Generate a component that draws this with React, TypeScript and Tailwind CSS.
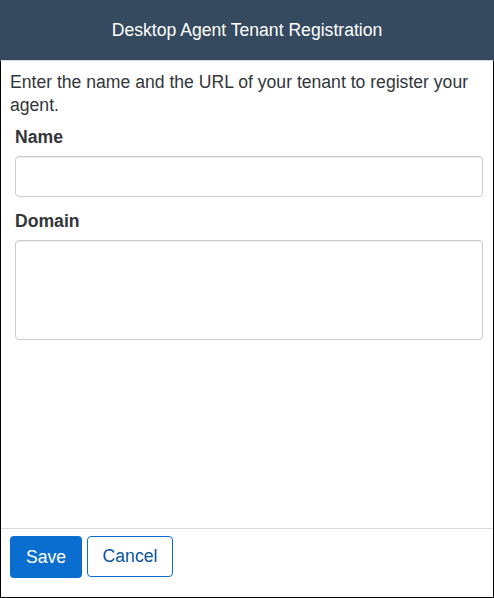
import React, { useState } from 'react';

const App: React.FC = () => {
  const [name, setName] = useState('');
  const [domain, setDomain] = useState('');

  return (
    <div className="flex h-[598px] w-[494px] flex-col bg-white font-['Liberation_Sans',Arial,sans-serif] text-[#32363a]">
      <div className="flex h-[60px] flex-none items-center justify-center bg-[#354a5f] text-[17.6px] text-white">
        Desktop Agent Tenant Registration
      </div>

      <div className="flex flex-1 flex-col border-x border-t border-x-black border-t-[#d9d9d9]">
        <div className="flex-1 pt-[10px]">
          <p className="px-[9px] text-[17.6px] leading-[23px]">
            Enter the name and the URL of your tenant to register your agent.
          </p>

          <div className="pl-[14px] pr-[10px]">
            <label className="mt-[9px] block text-[17.6px] font-bold leading-[22px]">Name</label>
            <input
              type="text"
              value={name}
              onChange={(e) => setName(e.target.value)}
              className="mt-[8px] block h-[41px] w-full rounded-[4px] border border-[#cccccc] px-2 shadow-[inset_0_1px_1px_rgba(0,0,0,0.075)] outline-none"
            />

            <label className="mt-[13px] block text-[17.6px] font-bold leading-[22px]">Domain</label>
            <textarea
              value={domain}
              onChange={(e) => setDomain(e.target.value)}
              className="mt-[8px] block h-[100px] w-full resize-none rounded-[4px] border border-[#cccccc] px-2 shadow-[inset_0_1px_1px_rgba(0,0,0,0.075)] outline-none"
            />
          </div>
        </div>

        <div className="flex h-[69px] flex-none items-start gap-[5px] border-t border-[#d9d9d9] px-[9px] pt-[7px]">
          <button className="h-[42px] w-[72px] rounded-[4px] bg-[#0a6ed1] text-[17.6px] text-white">
            Save
          </button>
          <button className="h-[41px] w-[86px] rounded-[4px] border border-[#0a6ed1] bg-white text-[17.6px] text-[#0854a0]">
            Cancel
          </button>
        </div>
      </div>
      <div className="h-px flex-none bg-black" />
    </div>
  );
};

export default App;
